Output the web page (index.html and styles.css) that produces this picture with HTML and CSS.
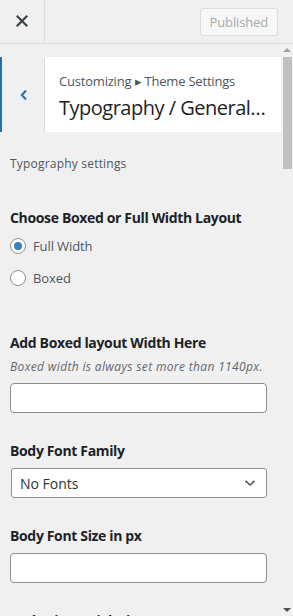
FILE: index.html
```html
<!DOCTYPE html>
<html lang="en">
<head>
  <meta charset="UTF-8" />
  <title>Customize: Typography / General Settings</title>
  <link rel="stylesheet" href="styles.css">
</head>
<body>

  <header class="topbar">
    <button class="close-btn" type="button" aria-label="Close the Customizer">
      <svg width="12" height="12" viewBox="0 0 12 12" aria-hidden="true">
        <path d="M1.5 1.5 L10.5 10.5 M10.5 1.5 L1.5 10.5" stroke="#3c434a" stroke-width="2.2" stroke-linecap="square" fill="none"/>
      </svg>
    </button>
    <div class="topbar-right">
      <button class="publish-btn" type="button" disabled>Published</button>
    </div>
  </header>

  <div class="scroll-area">
    <main class="panel">

      <div class="panel-head">
        <button class="back-btn" type="button" aria-label="Back">
          <svg width="10" height="12" viewBox="0 0 10 12" aria-hidden="true">
            <path d="M7 1.5 L2.8 6 L7 10.5" stroke="#2271b1" stroke-width="2" fill="none"/>
          </svg>
        </button>
        <div class="panel-title">
          <span class="crumb">Customizing &#9656; Theme Settings</span>
          <h2>Typography / General Settings</h2>
        </div>
      </div>

      <p class="section-desc">Typography settings</p>

      <div class="control first">
        <span class="control-label">Choose Boxed or Full Width Layout</span>
        <label class="radio-row">
          <input type="radio" name="layout" checked>
          <span>Full Width</span>
        </label>
        <label class="radio-row">
          <input type="radio" name="layout">
          <span>Boxed</span>
        </label>
      </div>

      <div class="control wide-gap">
        <span class="control-label">Add Boxed layout Width Here</span>
        <span class="control-desc">Boxed width is always set more than 1140px.</span>
        <input class="text-input" type="text">
      </div>

      <div class="control">
        <span class="control-label">Body Font Family</span>
        <div class="select-box">
          <span>No Fonts</span>
          <svg width="12" height="8" viewBox="0 0 12 8" aria-hidden="true">
            <path d="M1.5 1.8 L6 6 L10.5 1.8" stroke="#50575e" stroke-width="1.6" fill="none"/>
          </svg>
        </div>
      </div>

      <div class="control">
        <span class="control-label">Body Font Size in px</span>
        <input class="text-input" type="text">
      </div>

      <div class="control">
        <span class="control-label">Body Line Height in px</span>
        <input class="text-input" type="text">
      </div>

    </main>

    <div class="scrollbar" aria-hidden="true">
      <span class="sb-arrow up"></span>
      <div class="sb-track"><div class="sb-thumb"></div></div>
      <span class="sb-arrow down"></span>
    </div>
  </div>

</body>
</html>
```

FILE: styles.css
```css
/* Base */
html, body {
  height: 100%;
}

body {
  margin: 0;
  font-family: 'Open Sans', 'Noto Sans', Arial, sans-serif;
  background: #f0f0f1;
  color: #1d2327;
  display: flex;
  flex-direction: column;
  overflow: hidden;
}

/* Top bar */
.topbar {
  height: 43px;
  flex-shrink: 0;
  display: flex;
  border-bottom: 1px solid #dcdcde;
  background: #f0f0f1;
}

.close-btn {
  width: 45px;
  border: none;
  border-right: 1px solid #dcdcde;
  background: transparent;
  display: flex;
  align-items: center;
  justify-content: center;
  padding: 0;
  padding-bottom: 1px;
}

.topbar-right {
  flex: 1;
  display: flex;
  justify-content: flex-end;
  align-items: center;
  padding-right: 15px;
}

.publish-btn {
  height: 28px;
  padding: 0 9px;
  font-family: inherit;
  font-size: 13px;
  letter-spacing: -0.15px;
  color: #a7aaad;
  background: #f6f7f7;
  border: 1px solid #dcdcde;
  border-radius: 3px;
}

/* Scroll area */
.scroll-area {
  flex: 1;
  display: flex;
  min-height: 0;
}

.panel {
  flex: 1;
  overflow: hidden;
  padding-top: 13px;
}

.panel-head {
  display: flex;
  height: 75px;
  background: #fff;
}

.back-btn {
  width: 45px;
  flex-shrink: 0;
  border: none;
  border-left: 2px solid #2271b1;
  border-right: 1px solid #dcdcde;
  background: #f0f0f1;
  display: flex;
  align-items: center;
  justify-content: center;
  padding: 0 0 0 1px;
}

.panel-title {
  flex: 1;
  min-width: 0;
  padding: 15px 14px 0 14px;
}

.crumb {
  display: block;
  font-size: 13px;
  line-height: 18px;
  letter-spacing: -0.2px;
  color: #50575e;
}

.panel-title h2 {
  margin: 4px 0 0;
  font-size: 20px;
  font-weight: 400;
  line-height: 27px;
  letter-spacing: -0.5px;
  color: #1d2327;
  white-space: nowrap;
  overflow: hidden;
  text-overflow: ellipsis;
}

.section-desc {
  margin: 24px 0 0;
  padding-left: 10px;
  font-size: 12px;
  line-height: 16px;
  letter-spacing: 0.2px;
  color: #50575e;
}

/* Controls */
.control {
  display: flex;
  flex-direction: column;
  padding: 0 14px 0 10px;
  margin-top: 28px;
}

.control.first {
  margin-top: 36px;
}

.control.wide-gap {
  margin-top: 45px;
}

.control-label {
  font-size: 14px;
  font-weight: 700;
  line-height: 20px;
  letter-spacing: -0.35px;
  margin-bottom: 7px;
}

.control.first .control-label {
  margin-bottom: 8px;
}

.control.wide-gap .control-label {
  margin-bottom: 6px;
}

.control-desc {
  font-size: 12px;
  font-style: italic;
  line-height: 16px;
  letter-spacing: 0.35px;
  color: #646970;
  margin-bottom: 8px;
}

.radio-row {
  display: flex;
  align-items: center;
  gap: 7px;
  height: 20px;
  font-size: 13px;
  letter-spacing: -0.1px;
  color: #50575e;
}

.radio-row + .radio-row {
  margin-top: 12px;
}

.radio-row input {
  appearance: none;
  margin: 0;
  width: 16px;
  height: 16px;
  border: 1px solid #8c8f94;
  border-radius: 50%;
  background: #fff;
  display: flex;
  align-items: center;
  justify-content: center;
}

.radio-row input:checked::before {
  content: "";
  width: 8px;
  height: 8px;
  border-radius: 50%;
  background: #3582c4;
}

.text-input {
  box-sizing: border-box;
  height: 30px;
  margin: 0;
  border: 1px solid #8c8f94;
  border-radius: 4px;
  background: #fff;
  font-family: inherit;
  font-size: 14px;
}

.select-box {
  box-sizing: border-box;
  height: 30px;
  margin-left: 1px;
  padding: 0 10px 0 8px;
  border: 1px solid #8c8f94;
  border-radius: 3px;
  background: #fff;
  display: flex;
  align-items: center;
  justify-content: space-between;
  font-size: 14px;
  color: #2c3338;
}

/* Fake scrollbar */
.scrollbar {
  width: 12px;
  flex-shrink: 0;
  display: flex;
  flex-direction: column;
  background: #f1f1f1;
}

.sb-arrow {
  height: 12px;
  flex-shrink: 0;
  display: flex;
  justify-content: center;
  align-items: center;
}

.sb-arrow::before {
  content: "";
  border-left: 4px solid transparent;
  border-right: 4px solid transparent;
}

.sb-arrow.up::before {
  border-bottom: 4px solid #a3a3a3;
}

.sb-arrow.down::before {
  border-top: 4px solid #505050;
}

.sb-track {
  flex: 1;
}

.sb-thumb {
  height: 112px;
  margin: 1px 1px 0 2px;
  background: #c1c1c1;
}
```
